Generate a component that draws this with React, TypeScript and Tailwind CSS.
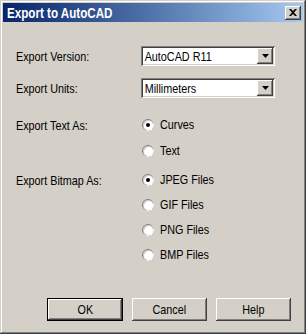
import React from "react";

const font = "font-['Liberation_Sans',Arial,sans-serif]";
// the reference text is narrower than Arial at the same height
const narrow = "inline-block origin-left scale-x-[0.83] whitespace-nowrap";

const raised =
  "shadow-[inset_-1px_-1px_0_#404040,inset_1px_1px_0_#ffffff,inset_-2px_-2px_0_#808080,inset_2px_2px_0_#d4d0c8]";
const sunken =
  "shadow-[inset_1px_1px_0_#808080,inset_-1px_-1px_0_#ffffff,inset_2px_2px_0_#404040,inset_-2px_-2px_0_#d4d0c8]";

function Combo({ value }: { value: string }) {
  return (
    <div className={`flex h-[20px] w-[134px] items-center justify-between bg-white p-[2px] ${sunken}`}>
      <span className={`pl-[2px] text-[13px] leading-none text-black ${narrow}`}>{value}</span>
      <div className={`flex h-[16px] w-[16px] items-center justify-center bg-[#d4d0c8] ${raised}`}>
        <svg width="7" height="4" viewBox="0 0 7 4">
          <path d="M0 0h7L3.5 4z" fill="#000" />
        </svg>
      </div>
    </div>
  );
}

function Radio({ label, checked }: { label: string; checked?: boolean }) {
  return (
    <div className="flex h-[20px] items-center gap-[6px] pl-[1px]">
      <div className="relative h-[12px] w-[12px] shrink-0 rounded-full bg-[#808080]">
        <div className="absolute inset-[1px] flex items-center justify-center rounded-full bg-white shadow-[inset_1px_1px_0_#c8c4bc]">
          {checked && <div className="h-[4px] w-[4px] rounded-full bg-black" />}
        </div>
        <div className="absolute inset-0 rounded-full shadow-[inset_-1px_-1px_0_#ffffff]" />
      </div>
      <span className={`text-[13px] text-black ${narrow}`}>{label}</span>
    </div>
  );
}

function Row({ label, className, children }: { label: string; className?: string; children: React.ReactNode }) {
  return (
    <div className={`flex ${className ?? ""}`}>
      <div className="h-[20px] w-[125px] shrink-0 pt-[1px] text-[13px] leading-[20px] text-black">
        <span className={narrow}>{label}</span>
      </div>
      <div>{children}</div>
    </div>
  );
}

function Button({ label, isDefault }: { label: string; isDefault?: boolean }) {
  const frame = isDefault
    ? "border border-black shadow-[inset_-1px_-1px_0_#404040,inset_1px_1px_0_#ffffff,inset_-2px_-2px_0_#808080]"
    : raised;
  return (
    <button
      className={`flex h-[23px] items-center justify-center bg-[#d4d0c8] text-[13px] text-black ${
        isDefault ? "w-[76px]" : "w-[75px]"
      } ${frame}`}
    >
      <span className="inline-block scale-x-[0.83] whitespace-nowrap">{label}</span>
    </button>
  );
}

export default function App() {
  return (
    <div
      className={`flex h-[334px] w-[306px] flex-col bg-[#d4d0c8] p-[3px] ${font} shadow-[inset_-1px_-1px_0_#404040,inset_1px_1px_0_#d4d0c8,inset_-2px_-2px_0_#808080,inset_2px_2px_0_#ffffff]`}
    >
      <div className="flex h-[19px] items-center justify-between bg-linear-to-r from-[#0a246a] to-[#a6caf0] pl-[4px] pr-[2px]">
        <span className={`text-[14px] font-bold leading-none text-white ${narrow}`}>Export to AutoCAD</span>
        <div className={`flex h-[14px] w-[16px] items-center justify-center bg-[#d4d0c8] ${raised}`}>
          <svg width="8" height="7" viewBox="0 0 8 7">
            <path d="M0 0h2l2 2 2-2h2L5 3.5 8 7H6L4 5 2 7H0l3-3.5z" fill="#000" />
          </svg>
        </div>
      </div>

      <div className="flex flex-col pl-[13px] pt-[24px]">
        <Row label="Export Version:">
          <Combo value="AutoCAD R11" />
        </Row>
        <Row label="Export Units:" className="mt-[12px]">
          <Combo value="Millimeters" />
        </Row>
        <Row label="Export Text As:" className="mt-[17px]">
          <div className="flex flex-col gap-[6px]">
            <Radio label="Curves" checked />
            <Radio label="Text" />
          </div>
        </Row>
        <Row label="Export Bitmap As:" className="mt-[9px]">
          <div className="flex flex-col gap-[5px]">
            <Radio label="JPEG Files" checked />
            <Radio label="GIF Files" />
            <Radio label="PNG Files" />
            <Radio label="BMP Files" />
          </div>
        </Row>

        <div className="mt-[33px] flex gap-[9px] pl-[31px]">
          <Button label="OK" isDefault />
          <Button label="Cancel" />
          <Button label="Help" />
        </div>
      </div>
    </div>
  );
}
